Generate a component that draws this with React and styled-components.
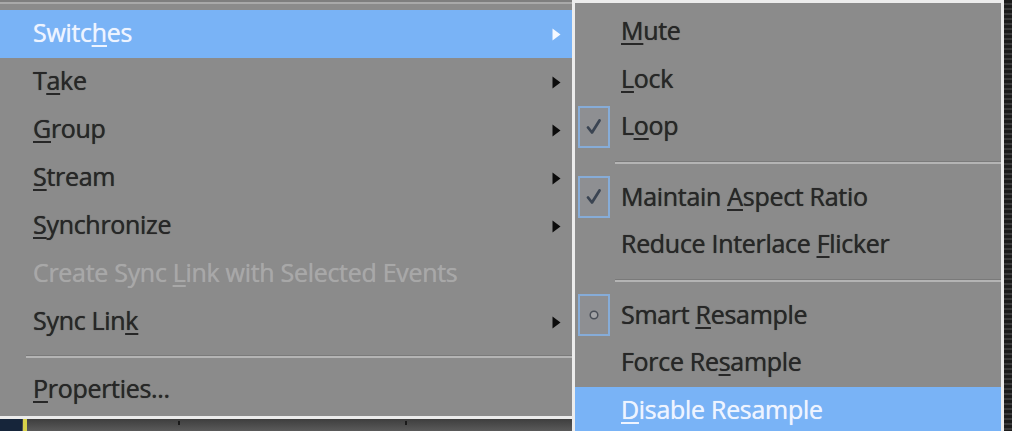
import React from 'react';
import styled, { createGlobalStyle } from 'styled-components';

const GlobalStyle = createGlobalStyle`
  html, body {
    margin: 0;
    padding: 0;
    background: #2a2a2a;
    overflow: hidden;
  }
  body {
    font-family: "Open Sans", "Noto Sans", sans-serif;
  }
`;

const mainItems = [
  { pre: 'Switc', key: 'h', post: 'es', sub: true, active: true },
  { pre: 'T', key: 'a', post: 'ke', sub: true },
  { pre: '', key: 'G', post: 'roup', sub: true },
  { pre: '', key: 'S', post: 'tream', sub: true },
  { pre: '', key: 'S', post: 'ynchronize', sub: true },
  { pre: 'Create Sync ', key: 'L', post: 'ink with Selected Events', disabled: true },
  { pre: 'Sync Lin', key: 'k', post: '', sub: true },
  { sep: true },
  { pre: '', key: 'P', post: 'roperties...' },
];

const subItems = [
  { pre: '', key: 'M', post: 'ute' },
  { pre: '', key: 'L', post: 'ock' },
  { pre: 'L', key: 'o', post: 'op', mark: 'check' },
  { sep: true },
  { pre: 'Maintain ', key: 'A', post: 'spect Ratio', mark: 'check' },
  { pre: 'Reduce Interlace ', key: 'F', post: 'licker' },
  { sep: true },
  { pre: 'Smart ', key: 'R', post: 'esample', mark: 'radio' },
  { pre: 'Force Re', key: 's', post: 'ample' },
  { pre: '', key: 'D', post: 'isable Resample', active: true },
];

const Label = ({ item }) => (
  <span>
    {item.pre}
    <Key>{item.key}</Key>
    {item.post}
  </span>
);

const Arrow = ({ active }) => (
  <svg width="9" height="13" viewBox="0 0 9 13">
    <path d="M0.5 0.5 L8.5 6.5 L0.5 12.5 Z" fill={active ? '#f4f8ff' : '#0c0c0c'} />
  </svg>
);

const Mark = ({ type }) => (
  <MarkBox>
    {type === 'check' ? (
      <svg width="18" height="18" viewBox="0 0 18 18">
        <path d="M3 9.5 L7 14.5 L14.5 2.5" stroke="#3a4452" strokeWidth="2.8" fill="none" strokeLinecap="round" strokeLinejoin="round" />
      </svg>
    ) : (
      <svg width="12" height="12" viewBox="0 0 12 12">
        <circle cx="6" cy="6" r="3.8" fill="#a2a3a6" stroke="#4a4f58" strokeWidth="1.5" />
      </svg>
    )}
  </MarkBox>
);

const App = () => {
  return (
    <Screen>
      <GlobalStyle />
      <LeftColumn>
        <MainMenu>
          <TopEdge />
          {mainItems.map((item, i) =>
            item.sep ? (
              <MainSep key={i} />
            ) : (
              <MainRow key={i} $active={item.active} $disabled={item.disabled}>
                <Label item={item} />
                {item.sub && <Arrow active={item.active} />}
              </MainRow>
            )
          )}
        </MainMenu>
        <Timeline>
          <NavyPatch />
          <YellowMark />
          <Tick $at={178} />
          <Tick $at={405} />
        </Timeline>
      </LeftColumn>
      <RightColumn>
        <Backdrop />
        <SubMenu>
          {subItems.map((item, i) =>
            item.sep ? (
              <SubSep key={i} />
            ) : (
              <SubRow key={i} $active={item.active}>
                <MarkSlot>{item.mark && <Mark type={item.mark} />}</MarkSlot>
                <Label item={item} />
              </SubRow>
            )
          )}
        </SubMenu>
      </RightColumn>
      <RightEdge />
    </Screen>
  );
};

const Screen = styled.div`
  width: 1012px;
  height: 431px;
  display: flex;
  overflow: hidden;
  background: #2a2a2a;
`;

const LeftColumn = styled.div`
  width: 572px;
  display: flex;
  flex-direction: column;
  flex-shrink: 0;
`;

const MainMenu = styled.div`
  background: #8b8b8b;
  border-bottom: 3px solid #ececec;
  display: flex;
  flex-direction: column;
  padding-bottom: 2px;
`;

const TopEdge = styled.div`
  height: 10px;
  background: linear-gradient(#7e7e7e 0 2px, #a9a9a9 2px 4px, #8b8b8b 4px);
`;

const MainRow = styled.div`
  height: 48px;
  display: flex;
  align-items: center;
  justify-content: space-between;
  padding: 0 11px 0 33px;
  font-size: 25px;
  line-height: 1;
  color: ${(p) => (p.$active ? '#eef4ff' : p.$disabled ? '#a8a8a8' : '#272727')};
  text-shadow: 0 0 0.7px currentColor;
  background: ${(p) => (p.$active ? '#79b3f6' : 'transparent')};
  letter-spacing: -0.3px;

  & > span {
    position: relative;
    top: -2px;
  }
`;

const Key = styled.u`
  text-decoration-thickness: 2px;
  text-underline-offset: 3px;
`;

const MainSep = styled.div`
  height: 20px;
  margin-left: 26px;
  background: linear-gradient(transparent 0 9px, #7a7a7a 9px 10px, #b4b4b4 10px 12px, transparent 12px);
`;

const Timeline = styled.div`
  flex: 1;
  position: relative;
  background: linear-gradient(#3e3e3e, #5a5a5a);
`;

const NavyPatch = styled.div`
  position: absolute;
  left: 0;
  top: 0;
  bottom: 0;
  width: 22px;
  background: #16253a;
`;

const YellowMark = styled.div`
  position: absolute;
  left: 23px;
  top: 0;
  bottom: 0;
  width: 4px;
  background: #d8d24a;
`;

const Tick = styled.div`
  position: absolute;
  left: ${(p) => p.$at}px;
  top: 2px;
  width: 2px;
  height: 4px;
  background: #1a1a1a;
`;

const RightColumn = styled.div`
  width: 432px;
  display: flex;
  flex-direction: column;
  flex-shrink: 0;
`;

const Backdrop = styled.div`
  height: 5px;
  background: linear-gradient(90deg, #2a2a2a 0 160px, #a0713a 160px 260px, #1c1c1c 260px);
`;

const SubMenu = styled.div`
  flex: 1;
  background: #8b8b8b;
  border: 3px solid #ececec;
  border-bottom: none;
  padding: 5px 0 0 2px;
  display: flex;
  flex-direction: column;
`;

const SubRow = styled.div`
  height: 47.5px;
  flex-shrink: 0;
  display: flex;
  align-items: center;
  font-size: 25px;
  line-height: 1;
  letter-spacing: -0.3px;
  color: ${(p) => (p.$active ? '#eef4ff' : '#272727')};
  text-shadow: 0 0 0.7px currentColor;
  background: ${(p) => (p.$active ? '#79b3f6' : 'transparent')};
  margin-left: ${(p) => (p.$active ? '-2px' : '0')};
  padding-left: ${(p) => (p.$active ? '2px' : '0')};

  & > span {
    position: relative;
    top: -1px;
  }
`;

const MarkSlot = styled.div`
  width: 43px;
  display: flex;
  justify-content: flex-start;
  padding-left: 1px;
`;

const MarkBox = styled.div`
  width: 28px;
  height: 38px;
  border: 2px solid #86acd8;
  display: flex;
  align-items: center;
  justify-content: center;
  background: #8e8f92;
`;

const SubSep = styled.div`
  height: 23px;
  flex-shrink: 0;
  margin-left: 38px;
  background: linear-gradient(transparent 0 10px, #7a7a7a 10px 11px, #b4b4b4 11px 13px, transparent 13px);
`;

const RightEdge = styled.div`
  flex: 1;
  background: repeating-linear-gradient(#1c1c1c 0 3px, #3a3a3a 3px 5px);
`;

export default App;
